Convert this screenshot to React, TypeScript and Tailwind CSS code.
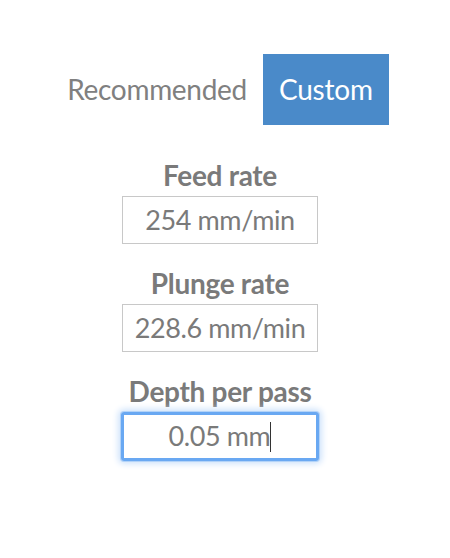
import React from "react";

const fields = [
  { label: "Feed rate", value: "254 mm/min" },
  { label: "Plunge rate", value: "228.6 mm/min" },
];

export default function App() {
  return (
    <div
      className="w-[440px] pt-[54px] flex flex-col items-center text-[#7a7a7a] bg-white min-h-[558px]"
      style={{ fontFamily: "Lato, 'Open Sans', sans-serif" }}
    >
      <div className="flex items-stretch">
        <button className="px-4 text-[28px] leading-[71px] tracking-[-0.3px] text-[#808080]">
          Recommended
        </button>
        <button className="px-4 text-[28px] leading-[71px] tracking-[-0.2px] text-white bg-[#4a8ac9]">
          Custom
        </button>
      </div>

      <div className="mt-[35px] flex flex-col items-center">
        {fields.map((f) => (
          <div key={f.label} className="flex flex-col items-center mb-[24px]">
            <span className="text-[28px] leading-[30px] font-bold tracking-[-0.3px]">{f.label}</span>
            <div className="mt-[6px] w-[196px] h-[48px] border border-[#c8c8c8] flex items-center justify-center text-[27px] tracking-[-0.4px]">
              {f.value}
            </div>
          </div>
        ))}
        <div className="flex flex-col items-center">
          <span className="text-[28px] leading-[30px] font-bold tracking-[-0.3px]">Depth per pass</span>
          <div className="mt-[6px] w-[198px] h-[49px] border-[3px] border-[#69a8f2] shadow-[0_0_0_1px_#b3d3f8,0_0_6px_3px_#cfe3fb] rounded-[3px] flex items-center justify-center text-[27px] tracking-[-0.4px]">
            <span>0.05 mm</span>
            <span className="w-px h-[30px] bg-[#333]" />
          </div>
        </div>
      </div>
    </div>
  );
}
